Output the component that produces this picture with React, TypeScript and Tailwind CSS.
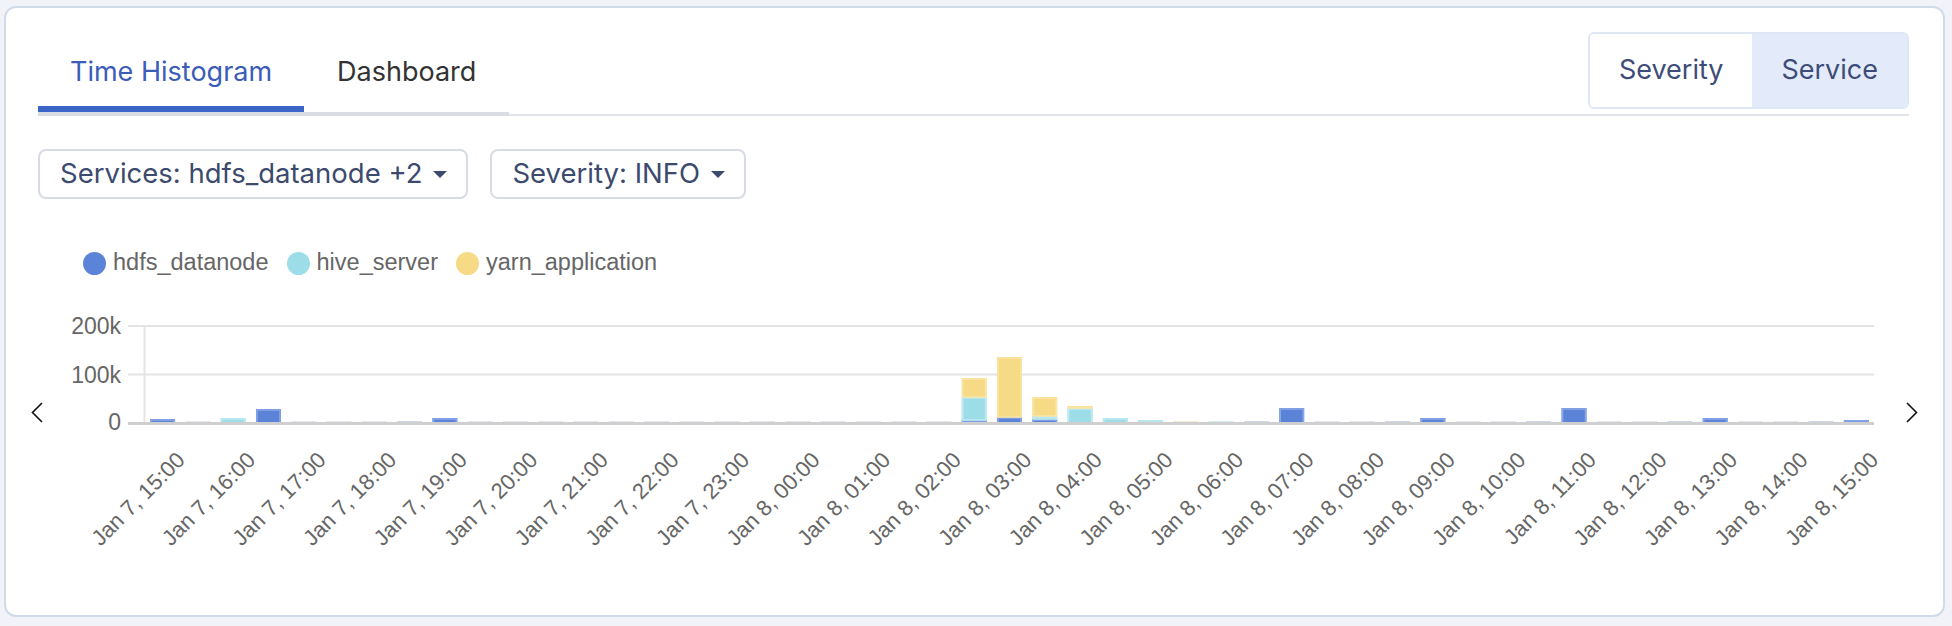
import { useState } from 'react'

// heights in px above the baseline: [hdfs_datanode, hive_server, yarn_application]
const bars: Record<number, [number, number, number]> = {
  0: [4, 0, 0],
  2: [0, 5, 0],
  3: [14, 0, 0],
  8: [5, 0, 0],
  23: [3, 23, 19],
  24: [6, 0, 60],
  25: [4, 3, 19],
  26: [0, 15, 2],
  27: [0, 5, 0],
  28: [0, 3, 0],
  32: [15, 0, 0],
  36: [5, 0, 0],
  40: [15, 0, 0],
  44: [5, 0, 0],
  48: [3, 0, 0],
}

const faint: Record<number, string> = {
  7: '#cfd9ee',
  29: '#f3ecd2',
  30: '#d4eef3',
  31: '#cfd9ee',
  35: '#cfd9ee',
  39: '#cfd9ee',
  43: '#cfd9ee',
  47: '#cfd9ee',
}

const series = [
  { name: 'hdfs_datanode', fill: '#5b84d8', edge: '#89a6e6' },
  { name: 'hive_server', fill: '#9cdde8', edge: '#bfe9f0' },
  { name: 'yarn_application', fill: '#f6da86', edge: '#f9e5a6' },
]

const X0 = 145
const BAND = 1729 / 49
const BASE = 423

function label(i: number) {
  const h = 15 + i / 2
  const day = h >= 24 ? 8 : 7
  const hh = String(h % 24).padStart(2, '0')
  return `Jan ${day}, ${hh}:00`
}

function Chevron({ dir }: { dir: 'left' | 'right' }) {
  return (
    <svg width="12" height="21" viewBox="0 0 12 21" fill="none">
      <polyline
        points={dir === 'left' ? '11,1 1.5,10.5 11,20' : '1,1 10.5,10.5 1,20'}
        stroke="#111"
        strokeWidth="1.6"
      />
    </svg>
  )
}

function Histogram() {
  const bands = Array.from({ length: 49 }, (_, i) => i)
  return (
    <svg width="1830" height="300" viewBox="60 300 1830 300" className="block">
      <line x1="128" x2="1874" y1="326" y2="326" stroke="#e4e4e4" strokeWidth="2" />
      <line x1="128" x2="1874" y1="374.5" y2="374.5" stroke="#e4e4e4" strokeWidth="2" />
      <line x1="144.5" x2="144.5" y1="325" y2="423" stroke="#e4e4e4" strokeWidth="2" />

      {[['200k', 326], ['100k', 374.5], ['0', 422]].map(([t, y]) => (
        <text key={t} x="121" y={Number(y) + 8} textAnchor="end" fontSize="23" fill="#666" fontFamily="'Liberation Sans', Arial, sans-serif">
          {t}
        </text>
      ))}

      {bands.map((i) => {
        const x = X0 + i * BAND + 5.1
        const v = bars[i]
        if (!v) {
          return <rect key={i} x={x} y={BASE - 2} width="25" height="2" fill={faint[i] || '#e3e8f0'} />
        }
        let top = BASE
        return (
          <g key={i}>
            {v.map((h, s) => {
              if (!h) return null
              top -= h
              const c = series[s]
              return (
                <g key={s}>
                  <rect x={x} y={top} width="25" height={h} fill={c.fill} />
                  <rect x={x + 1} y={top + 1} width="23" height={Math.max(h - 1, 1)} fill="none" stroke={c.edge} strokeWidth="1.6" />
                </g>
              )
            })}
          </g>
        )
      })}

      <line x1="128" x2="1874" y1="423.5" y2="423.5" stroke="#cfcfcf" strokeWidth="3" />

      {bands
        .filter((i) => i % 2 === 0)
        .map((i) => {
          const px = X0 + i * BAND + BAND / 2 + 18
          const py = 456
          return (
            <text
              key={i}
              x={px}
              y={py}
              dy="0.35em"
              textAnchor="end"
              fontSize="22"
              fill="#666"
              fontFamily="'Liberation Sans', Arial, sans-serif"
              transform={`rotate(-45 ${px} ${py})`}
            >
              {label(i)}
            </text>
          )
        })}
    </svg>
  )
}

export default function App() {
  const [tab, setTab] = useState('histogram')
  const [group, setGroup] = useState('service')

  return (
    <div className="h-[626px] bg-[#f2f3f8] pl-[4px] pr-[7px] pt-[6px] pb-[9px] font-['Inter',sans-serif]">
      <div className="h-full bg-white border-2 border-[#d0dbea] rounded-[12px] overflow-hidden">
        {/* Header: tabs + grouping toggle */}
        <div className="mx-[32px] mt-[24px] mr-[34px] flex items-end justify-between border-b-2 border-[#e0e3e9]">
          <div className="flex border-b-4 border-[#d9dce2] -mb-[2px]">
            <button
              onClick={() => setTab('histogram')}
              className={`px-[32px] pb-[16px] text-[27px] leading-[36px] border-b-[6px] ${tab === 'histogram' ? 'border-[#3b65c6] text-[#3b5cb8]' : 'border-transparent text-[#333]'}`}
            >
              Time Histogram
            </button>
            <button
              onClick={() => setTab('dashboard')}
              className={`px-[33px] pb-[16px] text-[27px] leading-[36px] border-b-[6px] ${tab === 'dashboard' ? 'border-[#3b65c6] text-[#3b5cb8]' : 'border-transparent text-[#333]'}`}
            >
              Dashboard
            </button>
          </div>

          <div className="mb-[5px] h-[77px] flex border-2 border-[#dfe7f5] rounded-[6px] overflow-hidden">
            <button
              onClick={() => setGroup('severity')}
              className={`px-[29px] text-[27px] text-[#3d4c78] ${group === 'severity' ? 'bg-[#e3ebfa]' : 'bg-white'}`}
            >
              Severity
            </button>
            <button
              onClick={() => setGroup('service')}
              className={`px-[29px] text-[27px] text-[#3d4c78] ${group === 'service' ? 'bg-[#e3ebfa]' : 'bg-white'}`}
            >
              Service
            </button>
          </div>
        </div>

        {/* Filters */}
        <div className="ml-[32px] mt-[33px] flex gap-[22px]">
          {['Services: hdfs_datanode +2', 'Severity: INFO'].map((t) => (
            <button key={t} className="h-[50px] flex items-center gap-[11px] pl-[20px] pr-[19px] border-2 border-[#d6dbe4] rounded-[8px] text-[27.5px] text-[#3c4a6e]">
              <span>{t}</span>
              <span className="w-0 h-0 border-l-[7px] border-r-[7px] border-t-[7px] border-l-transparent border-r-transparent border-t-[#3c4a6e]" />
            </button>
          ))}
        </div>

        {/* Legend */}
        <div className="ml-[77px] mt-[52px] h-[24px] flex items-center gap-[18px] font-['Liberation_Sans',Arial,sans-serif] text-[23.5px] text-[#666]">
          {series.map((s) => (
            <div key={s.name} className="flex items-center gap-[7px]">
              <span className="w-[23px] h-[23px] rounded-full" style={{ backgroundColor: s.fill }} />
              <span>{s.name}</span>
            </div>
          ))}
        </div>

        {/* Chart */}
        <div className="mt-[25px] flex">
          <button className="w-[54px] pl-[25px] self-start mt-[102px]">
            <Chevron dir="left" />
          </button>
          <Histogram />
          <button className="pl-[16px] self-start mt-[102px]">
            <Chevron dir="right" />
          </button>
        </div>
      </div>
    </div>
  )
}
